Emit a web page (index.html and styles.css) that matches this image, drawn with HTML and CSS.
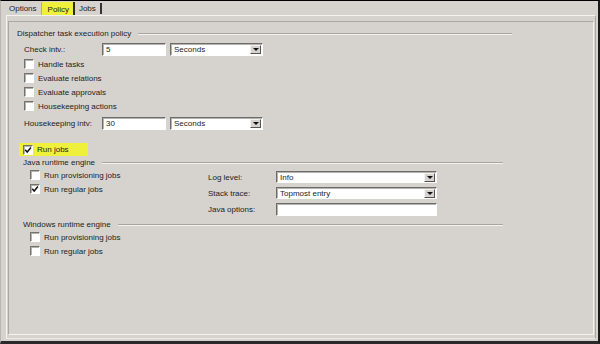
FILE: index.html
```html
<!DOCTYPE html>
<html lang="en">
<head>
  <meta charset="UTF-8">
  <title>Policy</title>
  <link rel="stylesheet" href="styles.css">
</head>
<body>
  <div class="window">
    <!-- tab strip -->
    <div class="tabs">
      <span class="tab">Options</span>
      <span class="tab active">Policy</span>
      <span class="tab last">Jobs</span>
    </div>

    <div class="sheet">
      <div class="inner">

        <!-- Dispatcher task execution policy -->
        <div class="group-head wide">
          <span>Dispatcher task execution policy</span>
          <span class="rule"></span>
        </div>
        <div class="form-row first">
          <label class="form-label">Check intv.:</label>
          <span class="field num">5</span>
          <span class="field combo"><span class="value">Seconds</span><span class="arrow"></span></span>
        </div>
        <div class="check-row lead"><span class="cb"></span>Handle tasks</div>
        <div class="check-row"><span class="cb"></span>Evaluate relations</div>
        <div class="check-row"><span class="cb"></span>Evaluate approvals</div>
        <div class="check-row"><span class="cb"></span>Housekeeping actions</div>
        <div class="form-row">
          <label class="form-label">Housekeeping intv:</label>
          <span class="field num">30</span>
          <span class="field combo"><span class="value">Seconds</span><span class="arrow"></span></span>
        </div>

        <div class="run-jobs">
          <span class="mark"><span class="cb on"><svg viewBox="0 0 8 8" width="8" height="8"><path d="M1.2 3.8 L3.2 6 L6.9 1.6" fill="none" stroke="#111" stroke-width="1.5"/></svg></span>Run jobs</span>
        </div>

        <!-- Java runtime engine -->
        <div class="group-head sub">
          <span>Java runtime engine</span>
          <span class="rule"></span>
        </div>
        <div class="engine">
          <div class="engine-checks">
            <div class="check-row"><span class="cb"></span>Run provisioning jobs</div>
            <div class="check-row"><span class="cb on"><svg viewBox="0 0 8 8" width="8" height="8"><path d="M1.2 3.8 L3.2 6 L6.9 1.6" fill="none" stroke="#111" stroke-width="1.5"/></svg></span>Run regular jobs</div>
          </div>
          <div class="engine-opts">
            <label class="opt-label">Log level:</label>
            <span class="field combo long"><span class="value">Info</span><span class="arrow"></span></span>
            <label class="opt-label">Stack trace:</label>
            <span class="field combo long"><span class="value">Topmost entry</span><span class="arrow"></span></span>
            <label class="opt-label">Java options:</label>
            <span class="field text long"></span>
          </div>
        </div>

        <!-- Windows runtime engine -->
        <div class="group-head sub win">
          <span>Windows runtime engine</span>
          <span class="rule"></span>
        </div>
        <div class="engine-checks">
          <div class="check-row"><span class="cb"></span>Run provisioning jobs</div>
          <div class="check-row"><span class="cb"></span>Run regular jobs</div>
        </div>

      </div>
    </div>
  </div>
</body>
</html>
```

FILE: styles.css
```css
body {
  margin: 0;
  background-color: #d6d3ce;
  font-family: "Liberation Sans", Arial, sans-serif;
  font-size: 8px;
  color: #1c1c1c;
}
.window {
  width: 600px;
  height: 344px;
  box-sizing: border-box;
  border-top: 1px solid #000;
  border-right: 2px solid #1a1a1a;
  border-bottom: 3px solid #2a2a2a;
  border-left: 1px solid #b9b6b0;
  display: flex;
  flex-direction: column;
}

/* tabs */
.tabs {
  display: flex;
  height: 14px;
  padding-left: 4px;
}
.tab {
  display: flex;
  align-items: center;
  padding: 0 4px;
  height: 14px;
}
.tab.active {
  background-color: #eef03c;
  margin: 1px 0 0 0;
  padding: 0 4px 0 6px;
  border-left: 1px solid #b8b83a;
  border-right: 2px solid #2c2c20;
}
.tab.last {
  height: 11px;
  margin-top: 2px;
  border-right: 2px solid #333;
}

/* sheet and inner panel */
.sheet {
  flex: 1;
  margin: 0 2px 2px 5px;
  padding: 5px 1px 3px 1px;
  border: 1px solid #f4f3f0;
  border-right-color: #aaa7a2;
  border-bottom-color: #ebe9e5;
  display: flex;
}
.inner {
  flex: 1;
  border: 1px solid #aaa7a2;
  border-right-color: #f4f3f0;
  border-bottom-color: #f4f3f0;
  padding: 5px 0 0 8px;
}

/* group headings with an etched rule */
.group-head {
  display: flex;
  align-items: center;
  height: 12px;
  white-space: nowrap;
}
.group-head.wide {
  width: 495px;
}
.group-head.sub {
  width: 480px;
  padding-left: 6px;
}
.group-head.win {
  margin-top: 2px;
}
.rule {
  flex: 1;
  margin-left: 7px;
  margin-top: 2px;
  border-top: 1px solid #a8a5a0;
  border-bottom: 1px solid #f4f3f0;
}

/* label + field rows */
.form-row {
  display: flex;
  align-items: center;
  height: 13px;
  margin-top: 4px;
  padding-left: 7px;
}
.form-label {
  width: 78px;
}
.field {
  box-sizing: border-box;
  height: 13px;
  background-color: #fff;
  border: 1px solid #fff;
  border-top-color: #6e6c68;
  border-left-color: #6e6c68;
  box-shadow: inset 1px 1px 0 #b5b3ae;
  display: flex;
  align-items: center;
  padding-left: 3px;
}
.field.num {
  width: 64px;
}
.combo {
  width: 93px;
  margin-left: 4px;
  padding-right: 1px;
}
.combo .value {
  flex: 1;
}
.arrow {
  width: 11px;
  height: 9px;
  box-sizing: border-box;
  background-color: #d6d3ce;
  border: 1px solid #555;
  border-top-color: #f4f3f0;
  border-left-color: #f4f3f0;
  position: relative;
}
.arrow::after {
  content: "";
  position: absolute;
  left: 2px;
  top: 2px;
  border-left: 3px solid transparent;
  border-right: 3px solid transparent;
  border-top: 3px solid #111;
}

/* checkboxes */
.check-row {
  display: flex;
  align-items: center;
  height: 14px;
  padding-left: 7px;
}
.check-row.lead {
  margin-top: 1px;
}
.cb {
  width: 10px;
  height: 10px;
  box-sizing: border-box;
  background-color: #fff;
  border: 1px solid #fff;
  border-top-color: #74726e;
  border-left-color: #74726e;
  box-shadow: inset 1px 1px 0 #b5b3ae;
  margin-right: 4px;
  display: flex;
  align-items: center;
  justify-content: center;
}

.run-jobs {
  margin-top: 13px;
  height: 13px;
  padding-left: 2px;
  display: flex;
}
.mark {
  display: flex;
  align-items: center;
  width: 69px;
  box-sizing: border-box;
  padding-left: 4px;
  background-color: #eef03c;
}

/* engine block */
.engine {
  display: flex;
  height: 48px;
}
.engine-checks {
  width: 191px;
  padding-left: 6px;
  box-sizing: border-box;
}
.engine-opts {
  display: grid;
  grid-template-columns: 68px 161px;
  grid-template-rows: 12px 12px 13px;
  row-gap: 4px;
  align-items: center;
  padding-top: 3px;
}
.field.long {
  width: 161px;
  height: 12px;
}
.combo.long {
  margin-left: 0;
}
.field.text {
  height: 13px;
}
```
